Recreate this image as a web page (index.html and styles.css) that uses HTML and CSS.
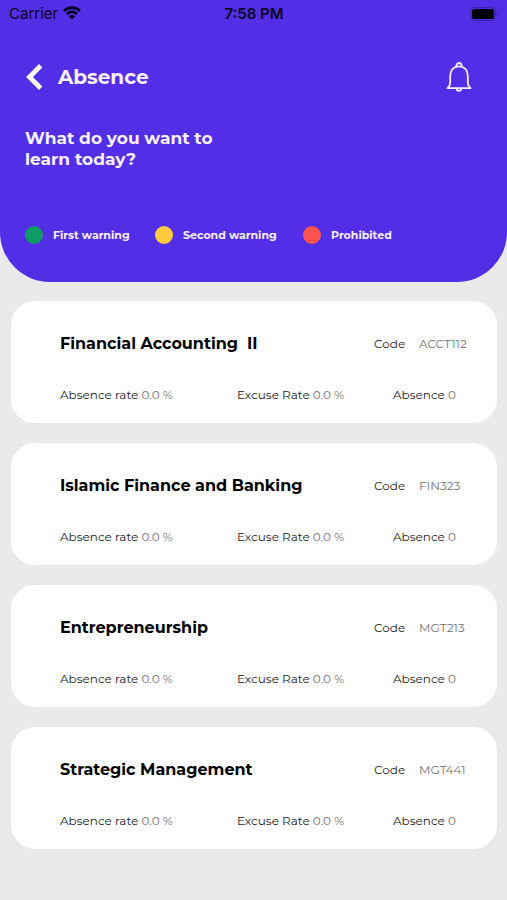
FILE: index.html
```html
<!DOCTYPE html>
<html lang="en">
<head>
<meta charset="utf-8">
<meta name="viewport" content="width=device-width, initial-scale=1">
<title>Absence</title>
<link rel="stylesheet" href="styles.css">
</head>
<body>
<header class="hero">
  <div class="status">
    <div class="carrier">
      <span>Carrier</span>
      <svg width="18" height="14" viewBox="0 0 18 14" aria-hidden="true">
        <g fill="none" stroke="#0a0620" stroke-width="2.6">
          <path d="M1 4.900a11.400 11.400 0 0 1 16 0"/>
          <path d="M3.900 8a7.300 7.300 0 0 1 10.200 0"/>
        </g>
        <path d="M9 13.600 5.900 10.400a4.400 4.400 0 0 1 6.200 0z" fill="#0a0620"/>
      </svg>
    </div>
    <time class="clock">7:58 PM</time>
    <svg class="battery" width="29" height="14" viewBox="0 0 29 14" aria-hidden="true">
      <rect x=".5" y=".5" width="25" height="13" rx="4" fill="none" stroke="#3a20a8"/>
      <rect x="2" y="2" width="22" height="10" rx="2.5" fill="#000"/>
      <path d="M27 5v4q1.600-.6 1.600-2T27 5z" fill="#3a20a8"/>
    </svg>
  </div>
  <div class="bar">
    <button class="icon-button" type="button" aria-label="Back">
      <svg width="18" height="28" viewBox="0 0 18 28"><path d="M15.700 2.800 4.500 14l11.200 11.200" fill="none" stroke="#fff" stroke-width="4.800"/></svg>
    </button>
    <h1>Absence</h1>
    <button class="icon-button bell" type="button" aria-label="Notifications">
      <svg width="26" height="30" viewBox="0 0 26 30" fill="none" stroke="#f4edff" stroke-width="1.800" stroke-linejoin="round" stroke-linecap="round">
        <path d="M1.500 26.200h23c-1.800-1.500-2.700-3.300-2.700-6.200v-6.500c0-5.400-3.600-9.200-8.800-9.200s-8.800 3.800-8.800 9.200V20c0 2.900-.9 4.700-2.700 6.200z"/>
        <path d="M10.400 4.500V3.600a2.600 2.600 0 0 1 5.200 0v.9M10.700 26.500a2.300 2.300 0 0 0 4.600 0"/>
      </svg>
    </button>
  </div>
  <p class="question">What do you want to learn today?</p>
  <ul class="legend">
    <li><span class="dot first"></span>First warning</li>
    <li><span class="dot second"></span>Second warning</li>
    <li><span class="dot prohibited"></span>Prohibited</li>
  </ul>
</header>
<main class="courses">
  <article class="card">
    <div class="top"><h2>Financial Accounting&nbsp; II</h2><div class="code">Code<span class="value">ACCT112</span></div></div>
    <div class="rates"><span>Absence rate <span class="value">0.0 %</span></span><span>Excuse Rate <span class="value">0.0 %</span></span><span>Absence <span class="value">0</span></span></div>
  </article>
  <article class="card">
    <div class="top"><h2>Islamic Finance and Banking</h2><div class="code">Code<span class="value">FIN323</span></div></div>
    <div class="rates"><span>Absence rate <span class="value">0.0 %</span></span><span>Excuse Rate <span class="value">0.0 %</span></span><span>Absence <span class="value">0</span></span></div>
  </article>
  <article class="card">
    <div class="top"><h2>Entrepreneurship</h2><div class="code">Code<span class="value">MGT213</span></div></div>
    <div class="rates"><span>Absence rate <span class="value">0.0 %</span></span><span>Excuse Rate <span class="value">0.0 %</span></span><span>Absence <span class="value">0</span></span></div>
  </article>
  <article class="card">
    <div class="top"><h2>Strategic Management</h2><div class="code">Code<span class="value">MGT441</span></div></div>
    <div class="rates"><span>Absence rate <span class="value">0.0 %</span></span><span>Excuse Rate <span class="value">0.0 %</span></span><span>Absence <span class="value">0</span></span></div>
  </article>
</main>
</body>
</html>
```
FILE: styles.css
```css
* { box-sizing: border-box; }
body {
  margin: 0;
  min-height: 100vh;
  background: #eaeaea;
  color: #222;
  font-family: Montserrat, Inter, sans-serif;
}
h1, h2, p, ul { margin: 0; padding: 0; }
.hero {
  background: #522ee6;
  color: #f6f0ff;
  border-radius: 0 0 50px 50px;
  padding-bottom: 36px;
}
.status {
  display: grid;
  grid-template-columns: 1fr auto 1fr;
  align-items: center;
  height: 28px;
  padding: 0 8px 0 9px;
  color: #0a0620;
  font: 15px/28px Inter, sans-serif;
}
.carrier { display: flex; align-items: center; gap: 5px; }
.carrier svg { margin-bottom: 2px; }
.clock { font-weight: 600; }
.battery { justify-self: end; margin-bottom: 1px; }
.bar {
  display: flex;
  align-items: center;
  height: 40px;
  margin-top: 29px;
  padding: 0 35px 0 25px;
}
.icon-button {
  display: flex;
  padding: 0;
  border: 0;
  background: none;
  cursor: pointer;
}
.bell { margin-left: auto; }
h1 { margin-left: 15px; font-size: 20px; line-height: 28px; font-weight: 700; }
.question {
  max-width: 240px;
  margin-top: 31px;
  padding-left: 25px;
  font-size: 17px;
  line-height: 21px;
  font-weight: 700;
}
.legend {
  display: grid;
  grid-template-columns: 130px 148px auto;
  justify-content: start;
  margin-top: 54px;
  padding-left: 25px;
  list-style: none;
  font-size: 11px;
  line-height: 22px;
  font-weight: 700;
}
.legend li { display: flex; align-items: center; gap: 10px; }
.dot { width: 18px; height: 18px; border-radius: 50%; }
.first { background: #109b64; }
.second { background: #ffcb3d; }
.prohibited { background: #ff534f; }
.courses {
  display: flex;
  flex-direction: column;
  gap: 20px;
  padding: 19px 10px 20px 11px;
}
.card {
  padding: 31px 28px 17px 49px;
  border-radius: 24px;
  background: #fff;
  font-size: 12px;
  line-height: 22px;
}
.top { display: flex; justify-content: space-between; align-items: center; }
h2 { color: #000; font-size: 16px; line-height: 24px; font-weight: 700; }
.code { display: grid; grid-template-columns: 45px 50px; white-space: nowrap; }
.value { color: #747474; }
.rates {
  display: grid;
  grid-template-columns: 177fr 156fr 76fr;
  margin-top: 28px;
  white-space: nowrap;
}
```
